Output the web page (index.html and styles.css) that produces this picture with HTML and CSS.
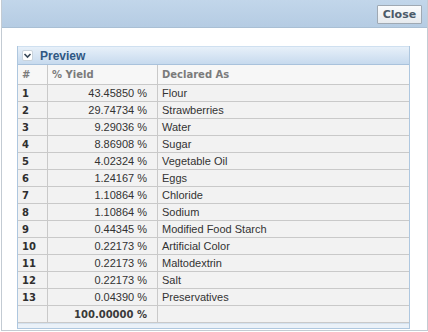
FILE: index.html
```html
<!DOCTYPE html>
<html>
<head>
<meta charset="utf-8">
<link rel="stylesheet" href="styles.css">
</head>
<body>
<div class="dialog">
  <div class="topbar">
    <button class="close-btn">Close</button>
  </div>
  <div class="content">
    <div class="panel">
      <div class="panel-header">
        <span class="toggle"><svg width="9" height="9" viewBox="0 0 9 9"><path d="M1.5 3 L4.5 6 L7.5 3" fill="none" stroke="#3a4a5a" stroke-width="1.6"/></svg></span>
        <span class="panel-title">Preview</span>
      </div>
      <table class="grid">
        <thead>
          <tr><th class="c-num">#</th><th class="c-yield">% Yield</th><th class="c-decl">Declared As</th></tr>
        </thead>
        <tbody>
          <tr><td class="c-num">1</td><td class="c-yield">43.45850 %</td><td class="c-decl">Flour</td></tr>
          <tr><td class="c-num">2</td><td class="c-yield">29.74734 %</td><td class="c-decl">Strawberries</td></tr>
          <tr><td class="c-num">3</td><td class="c-yield">9.29036 %</td><td class="c-decl">Water</td></tr>
          <tr><td class="c-num">4</td><td class="c-yield">8.86908 %</td><td class="c-decl">Sugar</td></tr>
          <tr><td class="c-num">5</td><td class="c-yield">4.02324 %</td><td class="c-decl">Vegetable Oil</td></tr>
          <tr><td class="c-num">6</td><td class="c-yield">1.24167 %</td><td class="c-decl">Eggs</td></tr>
          <tr><td class="c-num">7</td><td class="c-yield">1.10864 %</td><td class="c-decl">Chloride</td></tr>
          <tr><td class="c-num">8</td><td class="c-yield">1.10864 %</td><td class="c-decl">Sodium</td></tr>
          <tr><td class="c-num">9</td><td class="c-yield">0.44345 %</td><td class="c-decl">Modified Food Starch</td></tr>
          <tr><td class="c-num">10</td><td class="c-yield">0.22173 %</td><td class="c-decl">Artificial Color</td></tr>
          <tr><td class="c-num">11</td><td class="c-yield">0.22173 %</td><td class="c-decl">Maltodextrin</td></tr>
          <tr><td class="c-num">12</td><td class="c-yield">0.22173 %</td><td class="c-decl">Salt</td></tr>
          <tr><td class="c-num">13</td><td class="c-yield">0.04390 %</td><td class="c-decl">Preservatives</td></tr>
          <tr class="total"><td class="c-num"></td><td class="c-yield">100.00000 %</td><td class="c-decl"></td></tr>
        </tbody>
      </table>
      <div class="panel-footer"></div>
    </div>
  </div>
</div>
</body>
</html>
```
FILE: styles.css
```css
html, body {
  margin: 0;
  padding: 0;
  background: #ffffff;
}
body {
  width: 428px;
  height: 332px;
  overflow: hidden;
  font-family: "Liberation Sans", Arial, sans-serif;
}
.dialog {
  box-sizing: border-box;
  width: 427px;
  height: 331px;
  border: 1px solid #c3cbd3;
  border-top: none;
  margin-left: 1px;
  background: #ffffff;
}
.topbar {
  height: 27px;
  background: linear-gradient(#c2d6ea, #b5cce3);
  border-bottom: 1px solid #a9bfd4;
  display: flex;
  justify-content: flex-end;
  align-items: center;
  padding-right: 5px;
}
.close-btn {
  font-family: "DejaVu Sans", sans-serif;
  font-weight: bold;
  font-size: 11px;
  color: #4b5a69;
  height: 19px;
  width: 45px;
  padding: 0;
  border: 1px solid #9fa9b3;
  border-radius: 1px;
  background: linear-gradient(#fbfcfd, #e6eaee);
  margin-top: 1px;
}
.content {
  padding: 18px 17px 0 15px;
}
.panel {
  border: 1px solid #aec7df;
  border-top: none;
}
.panel-header {
  height: 17px;
  background: linear-gradient(#e7f0f9, #c7daee);
  border-top: 1px solid #cfe0f0;
  border-bottom: 1px solid #a9c2dc;
  display: flex;
  align-items: center;
  gap: 7px;
  padding-left: 4px;
}
.toggle {
  width: 11px;
  height: 11px;
  box-sizing: border-box;
  border: 1px solid #c9d3dc;
  background: #ffffff;
  border-radius: 2px;
  display: flex;
  align-items: center;
  justify-content: center;
}
.toggle svg { display: block; }
.panel-title {
  font-family: "Liberation Sans", Arial, sans-serif;
  font-weight: bold;
  font-size: 12px;
  color: #2f5783;
}
.grid {
  width: 100%;
  border-collapse: collapse;
  font-size: 11px;
  color: #333333;
}
.grid th, .grid td {
  border: 1px solid #c9c9c9;
  height: 16px;
  padding: 0 4px;
  background: #f2f2f2;
  white-space: nowrap;
}
.grid tr:first-child th { border-top: none; }
.grid th:first-child, .grid td:first-child { border-left: none; }
.grid th:last-child, .grid td:last-child { border-right: none; }
.grid th {
  height: 19px;
  text-align: left;
  font-family: "DejaVu Sans", sans-serif;
  font-weight: bold;
  font-size: 10px;
  color: #7b7b7b;
  background: #f7f7f7;
}
.grid td.c-num {
  font-family: "DejaVu Sans", sans-serif;
  font-weight: bold;
  font-size: 10px;
  color: #2f2f2f;
}
.c-num { width: 21px; }
.c-yield { width: 95px; }
.grid td.c-yield {
  text-align: right;
  padding-right: 10px;
}
.grid tr.total td.c-yield {
  font-family: "DejaVu Sans", sans-serif;
  font-weight: bold;
  font-size: 10px;
  color: #3a3a3a;
}
.grid .c-decl { padding-left: 4px; }
.panel-footer {
  height: 4px;
  background: #eaf1f8;
  border-top: 1px solid #d4e1ee;
}
```
